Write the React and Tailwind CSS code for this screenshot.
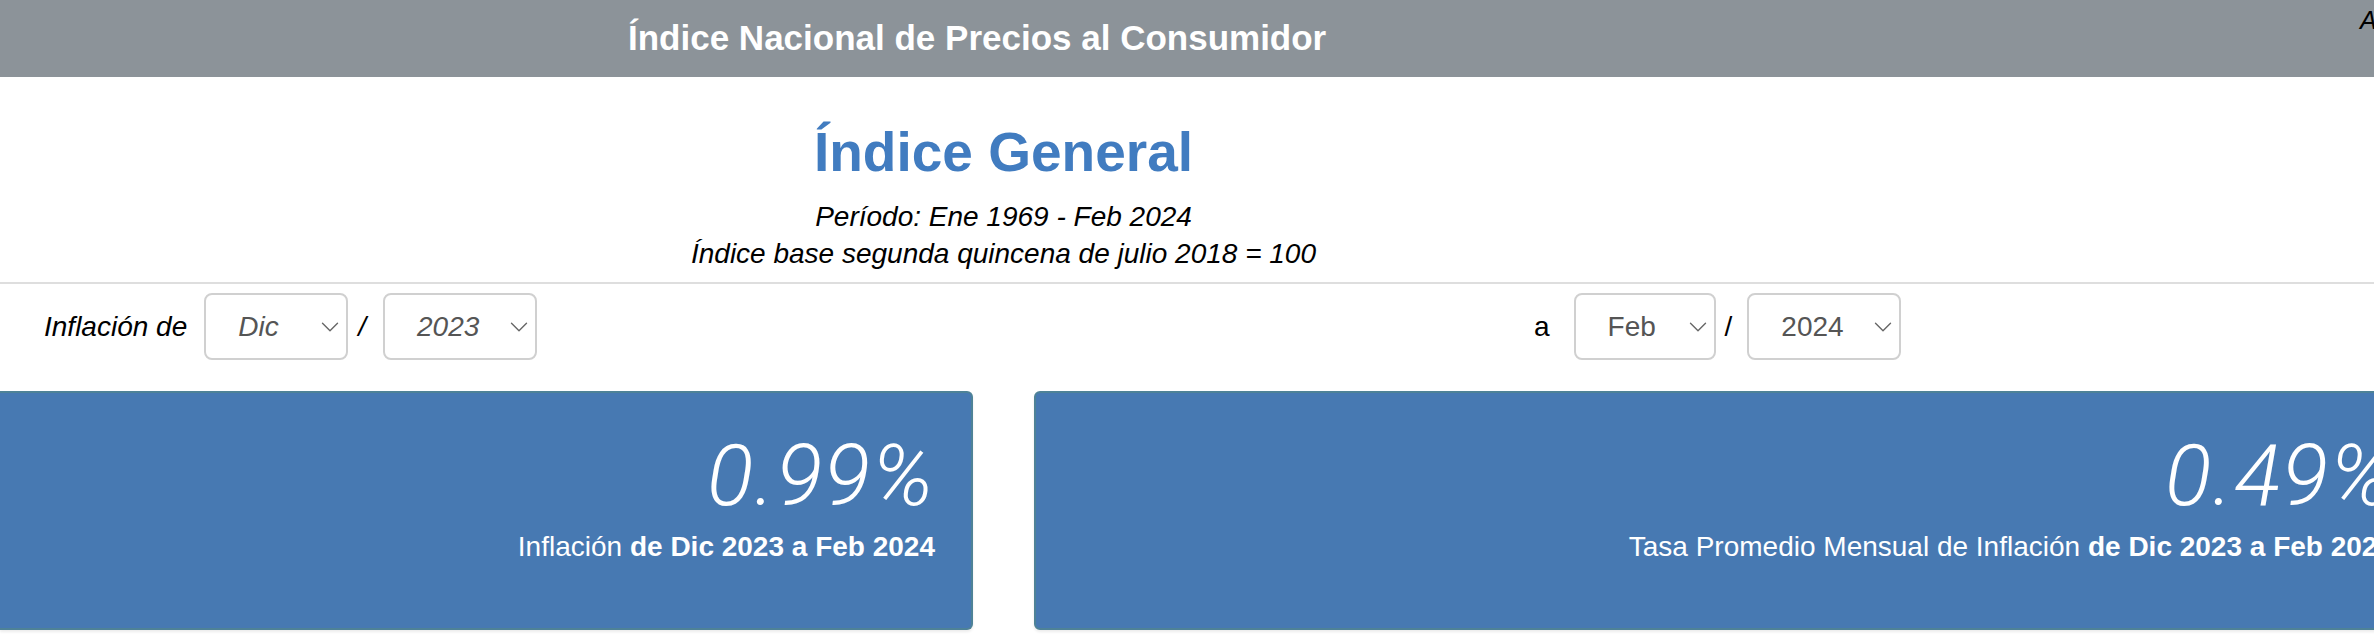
import { ChevronDown } from "lucide-react"

function Selector({ value, width, italic }) {
  return (
    <div
      className={`h-[67px] rounded-[8px] border-2 border-[#d0d0d0] bg-white flex items-center justify-between pl-[32px] pr-[1px] text-[28px] text-[#555] ${italic ? "italic" : ""}`}
      style={{ width }}
    >
      <span>{value}</span>
      <ChevronDown className="w-[30px] h-[30px] text-[#666]" strokeWidth={1.1} />
    </div>
  )
}

function Tarjeta({ valor, texto, rango, className }) {
  return (
    <div className={`h-[239px] bg-[#4779b2] border-2 border-[#4e8297] shadow-[0_2px_3px_rgba(0,0,0,0.08)] flex flex-col items-end pt-[40px] pr-[36px] text-white ${className}`}>
      <p className="text-[86px] leading-none italic font-light tracking-[1.5px] font-['Roboto','Liberation_Sans',sans-serif]">{valor}</p>
      <p className="mt-[14px] text-[28px] leading-none whitespace-nowrap">
        <span className="font-light">{texto}</span> <span className="font-bold">{rango}</span>
      </p>
    </div>
  )
}

export default function App() {
  const rango = "de Dic 2023 a Feb 2024"

  return (
    <div className="w-full min-h-screen bg-white overflow-hidden font-['Liberation_Sans',Arial,sans-serif] text-black">

      <header className="relative h-[77px] bg-[#8c9399] flex items-center pl-[628px]">
        <h1 className="text-white text-[35px] font-bold whitespace-nowrap">Índice Nacional de Precios al Consumidor</h1>
        <span className="absolute top-[2px] left-[2360px] text-[25px] italic whitespace-nowrap">A</span>
      </header>

      <div className="w-[2007px] text-center">
        <h2 className="mt-[47px] text-[55px] leading-[56px] font-bold text-[#417cc0]">Índice General</h2>
        <p className="mt-[18px] text-[28px] leading-[37px] italic">Período: Ene 1969 - Feb 2024</p>
        <p className="text-[28px] leading-[37px] italic">Índice base segunda quincena de julio 2018 = 100</p>
      </div>

      <div className="mt-[10px] h-[2px] bg-[#dedede]" />

      <div className="flex pt-[9px] pb-[31px]">
        <div className="w-[1034px] shrink-0 flex items-center pl-[44px] text-[28px]">
          <span className="italic mr-[17px]">Inflación de</span>
          <Selector value="Dic" width={144} italic />
          <span className="ml-[10px] mr-[17px] italic">/</span>
          <Selector value="2023" width={154} italic />
        </div>
        <div className="flex items-center pl-[500px] text-[28px]">
          <span className="mr-[24px]">a</span>
          <Selector value="Feb" width={142} />
          <span className="ml-[9px] mr-[15px]">/</span>
          <Selector value="2024" width={154} />
        </div>
      </div>

      <div className="flex gap-[61px]">
        <Tarjeta valor="0.99%" texto="Inflación" rango={rango} className="w-[973px] shrink-0 rounded-r-[6px] border-l-0" />
        <Tarjeta valor="0.49%" texto="Tasa Promedio Mensual de Inflación" rango={rango} className="w-[1397px] shrink-0 rounded-l-[6px]" />
      </div>

    </div>
  )
}
